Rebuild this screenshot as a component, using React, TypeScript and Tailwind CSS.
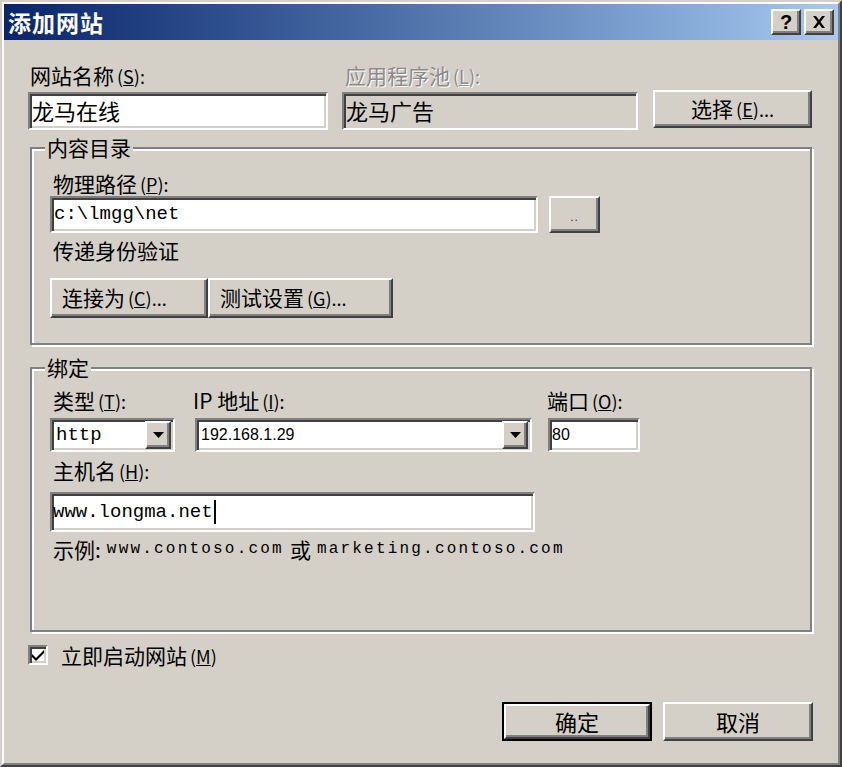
const cjk = "font-['Noto_Sans_CJK_SC',sans-serif]";
const mono = "font-['Liberation_Mono','Noto_Sans_CJK_SC',monospace]";
const raised =
  "bg-[#d4d0c8] border-2 border-t-white border-l-white border-b-[#404040] border-r-[#404040] shadow-[inset_-2px_-2px_0_#808080]";
const sunken =
  "border-2 border-t-[#808080] border-l-[#808080] border-b-white border-r-white shadow-[inset_2px_2px_0_#404040,inset_-2px_-2px_0_#d4d0c8]";

function Label({ text, k, rest = "):", gray = false, className = "" }: { text: string; k: string; rest?: string; gray?: boolean; className?: string }) {
  return (
    <div
      className={`h-[26px] text-[21px] leading-[26px] whitespace-nowrap ${cjk} ${
        gray ? "text-[#8a8a8a] [text-shadow:1px_1px_0_#fff]" : "text-black"
      } ${className}`}
    >
      {text}
      <span className="ml-[3px] text-[18px]">
        (<u>{k}</u>
        {rest}
      </span>
    </div>
  );
}

function Arrow() {
  return (
    <div className={`${raised} flex h-[28px] w-[26px] items-center justify-center`}>
      <svg width="11" height="6" viewBox="0 0 11 6">
        <path d="M0 0h11L5.5 6z" fill="#000" />
      </svg>
    </div>
  );
}

function Group({ title, className, children }: { title: string; className: string; children: React.ReactNode }) {
  return (
    <div
      className={`relative ml-[2px] w-[782px] border-2 border-[#808080] shadow-[inset_2px_2px_0_#fff,2px_2px_0_#fff] pl-[18px] ${className}`}
    >
      <span
        className={`absolute left-[13px] top-[-15px] bg-[#d4d0c8] px-[2px] text-[21px] leading-[26px] text-black ${cjk}`}
      >
        {title}
      </span>
      {children}
    </div>
  );
}

export default function App() {
  return (
    <div className="h-[767px] w-[842px] border-2 border-t-[#d4d0c8] border-l-[#d4d0c8] border-b-[#404040] border-r-[#404040]">
      <div className="flex h-full flex-col border-2 border-t-white border-l-white border-b-[#808080] border-r-[#808080] bg-[#d4d0c8]">
        {/* Title bar */}
        <div className="flex h-[36px] items-center justify-between bg-gradient-to-r from-[#0a246a] to-[#a6caf0] pl-[4px] pr-[4px]">
          <span className={`text-[23px] font-bold leading-none tracking-[1px] text-white ${cjk}`}>添加网站</span>
          <div className="flex gap-[3px]">
            <div className={`${raised} flex h-[26px] w-[30px] items-center justify-center text-[20px] font-bold leading-none font-['Liberation_Sans',sans-serif]`}>
              ?
            </div>
            <div className={`${raised} flex h-[26px] w-[30px] items-center justify-center`}>
              <svg width="14" height="12" viewBox="0 0 14 12">
                <path d="M1 0h3l3 4 3-4h3L8.5 6 13 12h-3L7 8 4 12H1l4.5-6z" fill="#000" />
              </svg>
            </div>
          </div>
        </div>

        <div className="pl-[24px]">
          {/* Name / pool row */}
          <div className="mt-[22px] flex items-end">
            <div className="w-[300px]">
              <Label text="网站名称" k="S" className="pl-[2px]" />
              <div className={`${sunken} mt-[4px] h-[38px] bg-white pl-[2px] text-[22px] leading-[32px] ${cjk}`}>龙马在线</div>
            </div>
            <div className="ml-[14px] w-[296px]">
              <Label text="应用程序池" k="L" gray className="pl-[3px]" />
              <div className={`${sunken} mt-[4px] h-[38px] bg-[#d4d0c8] pl-[2px] text-[22px] leading-[32px] ${cjk}`}>龙马广告</div>
            </div>
            <div className={`${raised} mb-[2px] ml-[15px] flex h-[38px] w-[159px] items-center justify-center text-[21px] ${cjk}`}>
              选择<span className="ml-[3px] text-[18px]">(<u>E</u>)...</span>
            </div>
          </div>

          {/* Content directory */}
          <Group title="内容目录" className="mt-[17px] pt-[21px] pb-[25px]">
            <Label text="物理路径" k="P" className="ml-[3px]" />
            <div className="flex">
              <div className={`${sunken} flex h-[37px] w-[488px] items-center bg-white pl-[2px] text-[19px] ${mono}`}>c:\lmgg\net</div>
              <div className={`${raised} ml-[11px] flex h-[37px] w-[51px] items-center justify-center pt-[4px] text-[12px] tracking-[1px] text-[#404040] font-['Liberation_Sans',sans-serif]`}>
                ..
              </div>
            </div>
            <div className={`ml-[3px] mt-[4px] h-[26px] text-[21px] leading-[26px] ${cjk}`}>传递身份验证</div>
            <div className="mt-[15px] flex">
              <div className={`${raised} flex h-[40px] w-[158px] items-center pl-[10px] text-[21px] ${cjk}`}>
                连接为<span className="ml-[3px] text-[18px]">(<u>C</u>)...</span>
              </div>
              <div className={`${raised} flex h-[40px] w-[185px] items-center pl-[10px] text-[21px] ${cjk}`}>
                测试设置<span className="ml-[3px] text-[18px]">(<u>G</u>)...</span>
              </div>
            </div>
          </Group>

          {/* Binding */}
          <Group title="绑定" className="mt-[22px] pt-[18px] pb-[68px]">
            <div className="flex">
              <div className="w-[125px]">
                <Label text="类型" k="T" className="ml-[3px]" />
                <div className={`${sunken} mt-[5px] flex h-[34px] items-center justify-between bg-white pl-[4px] pr-[2px] text-[19px] ${mono}`}>
                  http
                  <Arrow />
                </div>
              </div>
              <div className="ml-[20px] w-[337px]">
                <Label text="IP 地址" k="I" className="ml-[-2px]" />
                <div className={`${sunken} mt-[5px] flex h-[34px] items-center justify-between bg-white pl-[4px] pr-[2px] text-[16px] font-['Liberation_Sans',sans-serif]`}>
                  192.168.1.29
                  <Arrow />
                </div>
              </div>
              <div className="ml-[16px] w-[92px]">
                <Label text="端口" k="O" className="ml-[-1px]" />
                <div className={`${sunken} mt-[5px] flex h-[34px] items-center bg-white pl-[2px] text-[16px] font-['Liberation_Sans',sans-serif]`}>
                  80
                </div>
              </div>
            </div>
            <Label text="主机名" k="H" className="ml-[3px] mt-[5px]" />
            <div className={`${sunken} mt-[9px] flex h-[40px] w-[485px] items-center bg-white pl-[1px] text-[19px] ${mono}`}>
              www.longma.net<span className="ml-[1px] h-[24px] w-[2px] bg-black" />
            </div>
            <div className={`ml-[3px] mt-[4px] flex h-[26px] items-center whitespace-nowrap text-[21px] leading-[26px] ${cjk}`}>
              示例:
              <span className={`ml-[6px] text-[16px] tracking-[2.2px] ${mono}`}>www.contoso.com</span>
              <span className="mx-[6px]">或</span>
              <span className={`text-[16px] tracking-[2.2px] ${mono}`}>marketing.contoso.com</span>
            </div>
          </Group>

          {/* Start checkbox */}
          <div className="mt-[10px] flex h-[26px] items-center">
            <div className={`${sunken} flex h-[20px] w-[20px] items-center justify-center bg-white`}>
              <svg width="14" height="12" viewBox="0 0 14 12">
                <path d="M1 5l4 4 8-8v3l-8 8-4-4z" fill="#000" />
              </svg>
            </div>
            <span className={`ml-[13px] text-[21px] leading-[26px] ${cjk}`}>
              立即启动网站<span className="ml-[3px] text-[18px]">(<u>M</u>)</span>
            </span>
          </div>

          {/* Buttons */}
          <div className="mt-[34px] flex pl-[474px]">
            <div className="border-2 border-black">
              <div className={`${raised} flex h-[35px] w-[146px] items-center justify-center text-[22px] ${cjk}`}>确定</div>
            </div>
            <div className={`${raised} ml-[11px] flex h-[39px] w-[150px] items-center justify-center text-[22px] ${cjk}`}>取消</div>
          </div>
        </div>
      </div>
    </div>
  );
}
